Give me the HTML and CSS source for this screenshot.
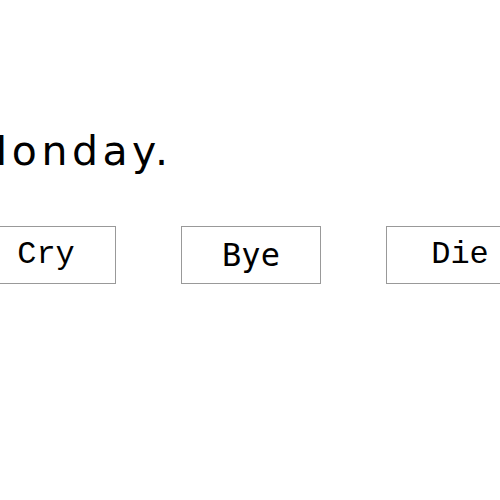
FILE: index.html
```html
<!DOCTYPE html>
<html lang="en">
<head>
    <meta charset="UTF-8">
    <meta name="viewport" content="width=device-width, initial-scale=1.0">
    <title>Monday</title>
    <link rel="stylesheet" href="styles.css">
</head>
<body>
    <div class="stage">
        <h1 class="title">Monday.</h1>

        <div class="choices">
            <button class="choice cry">Cry</button>
            <button class="choice bye">Bye</button>
            <button class="choice die">Die</button>
        </div>
    </div>
</body>
</html>
```

FILE: styles.css
```css
body {
    margin: 0;
    background-color: #ffffff;
    color: #000000;
    overflow: hidden;
}
.stage {
    padding-top: 126px;
}
.title {
    margin: 0 0 0 -28px;
    font-family: 'DejaVu Sans', sans-serif;
    font-size: 41px;
    font-weight: normal;
    line-height: 50px;
    letter-spacing: 4.5px;
    white-space: nowrap;
}
.choices {
    display: flex;
    gap: 65px;
    margin: 50px 0 0 -24px;
}
.choice {
    flex: 0 0 140px;
    height: 58px;
    padding: 0;
    background-color: #ffffff;
    border: 1px solid #999999;
    border-radius: 0;
    color: #000000;
    font-size: 32px;
    line-height: 56px;
}
.cry {
    font-family: 'Liberation Mono', monospace;
}
.bye {
    font-family: 'DejaVu Sans Mono', monospace;
}
.die {
    font-family: 'Liberation Mono', monospace;
    padding-left: 8px;
}
```
